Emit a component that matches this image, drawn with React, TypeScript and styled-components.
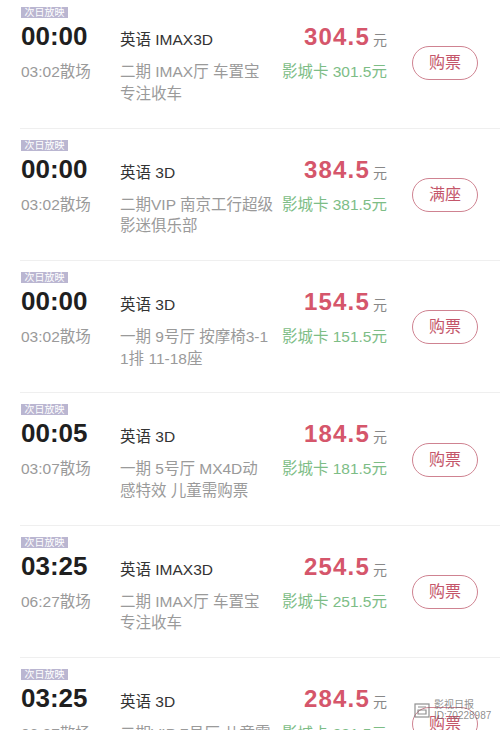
import React from "react";
import styled, { createGlobalStyle } from "styled-components";

const GlobalStyle = createGlobalStyle`
  html, body {
    margin: 0;
    padding: 0;
    background: #fff;
  }
  body {
    font-family: "Liberation Sans", "Noto Sans CJK SC", sans-serif;
    color: #333;
  }
`;

const Page = styled.div`
  position: relative;
  width: 500px;
  height: 730px;
  overflow: hidden;
  background: #fff;
`;

const List = styled.div`
  margin-top: -3.7px;
`;

const Row = styled.div`
  box-sizing: border-box;
  height: 132.4px;
  margin-left: 20px;
  padding: 0 22px 0 1px;
  border-bottom: 1px solid #efefef;
  display: flex;
`;

const Main = styled.div`
  flex: 1;
  margin-right: 25px;
  display: flex;
  flex-direction: column;
  align-items: flex-start;
  padding-top: 11px;
`;

const Tag = styled.div`
  height: 11px;
  padding: 0 3.5px;
  background: #bab6d1;
  color: #fff;
  font-size: 10px;
  line-height: 11px;
`;

const Grid = styled.div`
  align-self: stretch;
  margin-top: 3px;
  display: grid;
  grid-template-columns: 99px 1fr auto;
  row-gap: 7px;
  align-items: baseline;
`;

const Time = styled.div`
  font-size: 26px;
  line-height: 30px;
  font-weight: 700;
  color: #1f1f1f;
`;

const Name = styled.div`
  font-size: 15.5px;
  line-height: 22px;
  color: #333;
`;

const Price = styled.div`
  justify-self: end;
  font-size: 24px;
  line-height: 28px;
  font-weight: 700;
  color: #d5566b;
  letter-spacing: 1.2px;
  white-space: nowrap;
`;

const Unit = styled.span`
  margin-left: 3px;
  font-size: 14px;
  font-weight: 400;
  color: #888;
  letter-spacing: 0;
`;

const SubText = styled.div`
  font-size: 15.5px;
  line-height: 21.5px;
  color: #9a9a9a;
  white-space: nowrap;
`;

const Card = styled.div`
  justify-self: end;
  font-size: 15.5px;
  line-height: 21.5px;
  color: #7dbd86;
  white-space: nowrap;
`;

const BuyButton = styled.button`
  align-self: center;
  margin-top: 1px;
  width: 66px;
  height: 34px;
  padding: 0;
  border: 1px solid #cf8391;
  border-radius: 17px;
  background: #fff;
  color: #c4566a;
  font-family: "Liberation Sans", "Noto Sans CJK SC", sans-serif;
  font-size: 16px;
  line-height: 32px;
  cursor: pointer;
`;

const Watermark = styled.div`
  position: absolute;
  left: 414px;
  top: 700px;
  display: flex;
  align-items: center;
  gap: 3px;
  color: rgba(105, 105, 105, 0.75);
  pointer-events: none;
`;

const WatermarkText = styled.div`
  font-size: 10px;
  line-height: 10px;
  display: flex;
  flex-direction: column;
  gap: 1px;
`;

type Show = {
  time: string;
  end: string;
  name: string;
  price: string;
  card: string;
  hall: string[];
  action: string;
};

const shows: Show[] = [
  { time: "00:00", end: "03:02散场", name: "英语 IMAX3D", price: "304.5", card: "301.5", hall: ["二期 IMAX厅 车置宝", "专注收车"], action: "购票" },
  { time: "00:00", end: "03:02散场", name: "英语 3D", price: "384.5", card: "381.5", hall: ["二期VIP 南京工行超级", "影迷俱乐部"], action: "满座" },
  { time: "00:00", end: "03:02散场", name: "英语 3D", price: "154.5", card: "151.5", hall: ["一期 9号厅 按摩椅3-1", "1排 11-18座"], action: "购票" },
  { time: "00:05", end: "03:07散场", name: "英语 3D", price: "184.5", card: "181.5", hall: ["一期 5号厅 MX4D动", "感特效 儿童需购票"], action: "购票" },
  { time: "03:25", end: "06:27散场", name: "英语 IMAX3D", price: "254.5", card: "251.5", hall: ["二期 IMAX厅 车置宝", "专注收车"], action: "购票" },
  { time: "03:25", end: "06:27散场", name: "英语 3D", price: "284.5", card: "281.5", hall: ["二期VIP 7号厅 儿童需", "购票"], action: "购票" },
];

const ShowRow = ({ show }: { show: Show }) => (
  <Row>
    <Main>
      <Tag>次日放映</Tag>
      <Grid>
        <Time>{show.time}</Time>
        <Name>{show.name}</Name>
        <Price>
          {show.price}
          <Unit>元</Unit>
        </Price>
        <SubText>{show.end}</SubText>
        <SubText>
          {show.hall.map((line) => (
            <div key={line}>{line}</div>
          ))}
        </SubText>
        <Card>影城卡 {show.card}元</Card>
      </Grid>
    </Main>
    <BuyButton>{show.action}</BuyButton>
  </Row>
);

export default function App() {
  return (
    <Page>
      <GlobalStyle />
      <List>
        {shows.map((show, i) => (
          <ShowRow key={i} show={show} />
        ))}
      </List>
      <Watermark>
        <svg width="17" height="17" viewBox="0 0 17 17" fill="none" stroke="currentColor" strokeWidth="1.2">
          <rect x="1" y="2" width="14" height="13" />
          <path d="M4 5h8M4 8h8v4H4z" />
        </svg>
        <WatermarkText>
          <span>影视日报</span>
          <span>ID:70228987</span>
        </WatermarkText>
      </Watermark>
    </Page>
  );
}
